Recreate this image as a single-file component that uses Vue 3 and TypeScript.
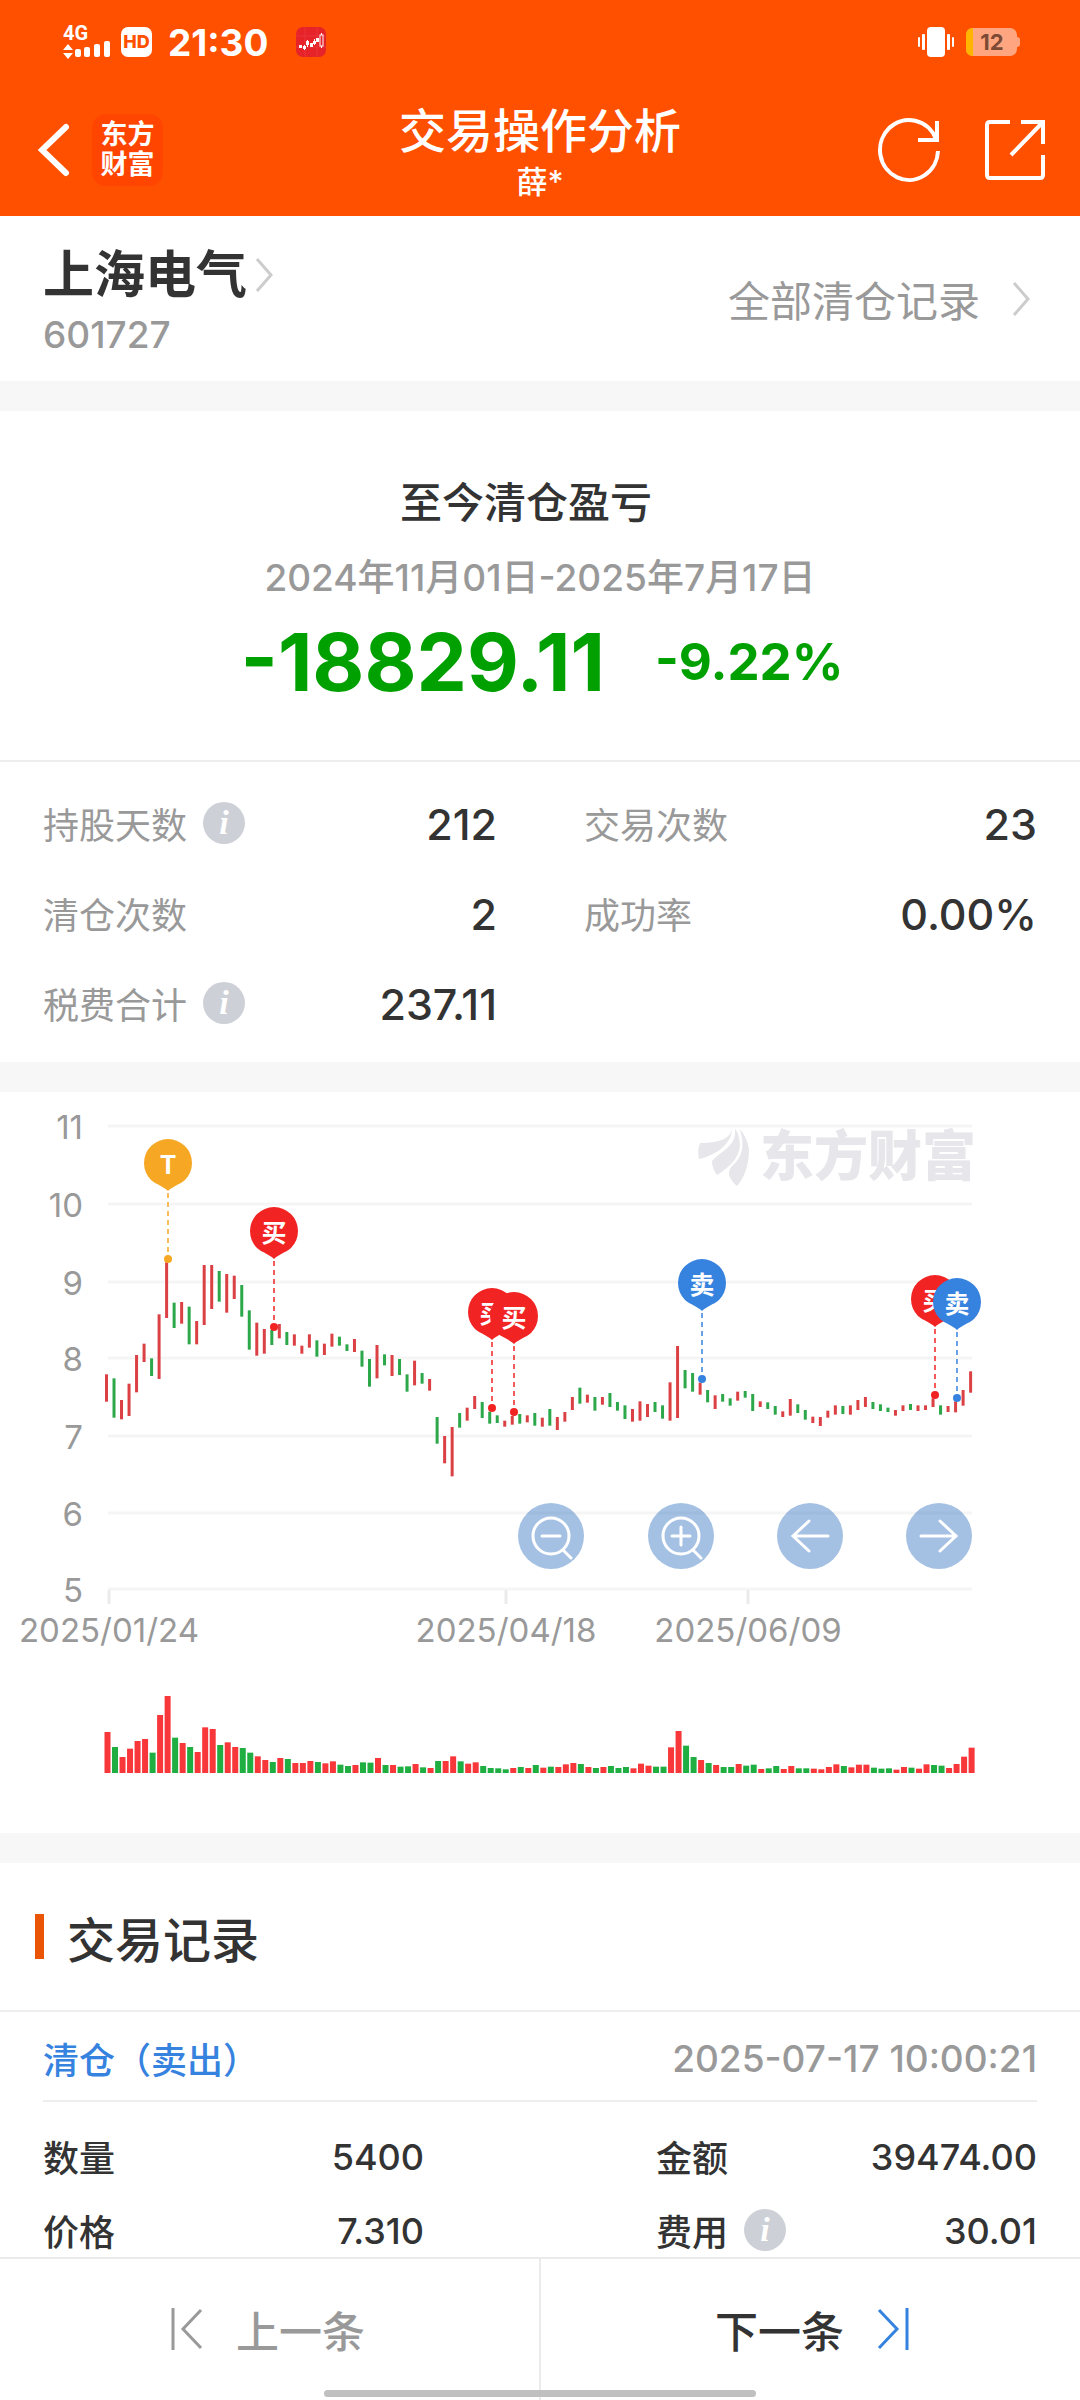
<script setup lang="ts">
type Dir = 'u' | 'd'
type Bar = [Dir, number, number, number, Dir?]

// Each bar: direction, high, low and volume height in thirds of a chart unit,
// then the volume colour when it differs from the candle's.
const bars: Bar[] = [
  ['u', 853, 935, 123], ['d', 865, 983, 78], ['u', 930, 988, 48], ['u', 881, 978, 73],
  ['u', 795, 907, 96], ['u', 761, 816, 102], ['d', 805, 858, 61], ['u', 673, 867, 174],
  ['u', 517, 684, 231], ['d', 638, 714, 106], ['u', 636, 701, 90], ['d', 650, 763, 78],
  ['u', 693, 763, 63], ['u', 525, 705, 137], ['u', 525, 657, 132], ['d', 543, 635, 84],
  ['u', 552, 668, 92], ['u', 557, 627, 78], ['d', 585, 680, 75], ['d', 661, 779, 61],
  ['u', 698, 797, 50], ['u', 717, 791, 39], ['d', 720, 765, 33], ['u', 702, 745, 45],
  ['d', 726, 765, 42], ['u', 733, 767, 30], ['u', 767, 791, 30], ['u', 733, 773, 36],
  ['d', 751, 800, 33], ['u', 761, 795, 29], ['u', 731, 770, 35], ['d', 740, 767, 25],
  ['d', 763, 783, 21], ['u', 747, 786, 24], ['d', 782, 830, 32], ['d', 807, 890, 31],
  ['u', 765, 865, 45], ['d', 793, 826, 24], ['u', 795, 858, 24], ['d', 807, 855, 19],
  ['d', 853, 905, 20], ['u', 812, 886, 27], ['d', 849, 881, 17], ['u', 867, 902, 15],
  ['d', 981, 1061, 36], ['u', 1038, 1120, 36], ['u', 1011, 1159, 50], ['d', 969, 1013, 35],
  ['u', 953, 992, 28], ['u', 918, 957, 32], ['d', 936, 984, 21], ['d', 965, 1001, 15],
  ['d', 976, 999, 14], ['u', 992, 1010, 11, 'd'], ['u', 978, 1004, 15], ['d', 972, 1001, 18],
  ['u', 976, 997, 15], ['d', 969, 1007, 24], ['u', 983, 1010, 16], ['d', 957, 1007, 19],
  ['u', 981, 1020, 18], ['u', 966, 995, 26], ['u', 921, 960, 30], ['d', 893, 941, 27],
  ['u', 914, 938, 18], ['d', 921, 962, 15], ['u', 921, 944, 18], ['d', 909, 951, 21],
  ['d', 936, 962, 15], ['d', 946, 987, 18], ['u', 957, 995, 14], ['u', 934, 992, 28],
  ['u', 942, 981, 22], ['d', 936, 966, 19], ['d', 946, 986, 19], ['u', 877, 992, 77],
  ['u', 768, 984, 126], ['d', 840, 895, 82], ['d', 849, 905, 48], ['u', 878, 914, 39],
  ['d', 900, 937, 30], ['u', 916, 957, 24], ['d', 912, 935, 18], ['d', 925, 947, 18],
  ['u', 905, 932, 27], ['d', 903, 923, 22], ['d', 912, 963, 25], ['u', 934, 951, 12],
  ['d', 937, 957, 14], ['d', 948, 974, 21], ['u', 964, 981, 12], ['u', 927, 977, 21],
  ['d', 943, 969, 14], ['d', 960, 989, 14], ['u', 980, 999, 13], ['u', 981, 1008, 11],
  ['u', 962, 983, 18], ['u', 946, 974, 26], ['d', 948, 972, 21], ['u', 946, 974, 17],
  ['u', 930, 960, 25], ['u', 921, 951, 25], ['d', 936, 957, 16], ['d', 943, 963, 13],
  ['d', 953, 966, 14], ['u', 960, 977, 10], ['u', 946, 963, 18], ['d', 942, 960, 16],
  ['u', 946, 963, 13], ['u', 946, 960, 26], ['u', 925, 951, 24, 'd'], ['d', 946, 974, 22],
  ['u', 948, 966, 15], ['u', 934, 967, 27], ['u', 900, 947, 49], ['u', 844, 908, 76],
]

const FIRST_X = 106.5
const STEP_X = 7.514
const VOLUME_BASE = 681

const candles = bars.map(([dir, high, low, volume, volumeDir], i) => ({
  dir,
  volumeDir: volumeDir ?? dir,
  x: FIRST_X + i * STEP_X,
  y: high / 3 - 2,
  h: (low - high) / 3,
  v: volume / 3,
}))

const priceLines = [
  { label: '11', y: 34 }, { label: '10', y: 112 }, { label: '9', y: 190 }, { label: '8', y: 266 },
  { label: '7', y: 344 }, { label: '6', y: 421 }, { label: '5', y: 497 },
]
const dates = [
  { label: '2025/01/24', x: 109 }, { label: '2025/04/18', x: 506 }, { label: '2025/06/09', x: 748 },
]
const markers = [
  { kind: 'both', label: 'T', x: 168, tip: 99, dot: 167 },
  { kind: 'buy', label: '买', x: 274, tip: 167, dot: 235 },
  { kind: 'buy', label: '买', x: 492, tip: 248, dot: 316 },
  { kind: 'buy', label: '买', x: 514, tip: 252, dot: 320 },
  { kind: 'sell', label: '卖', x: 702, tip: 219, dot: 287 },
  { kind: 'buy', label: '买', x: 935, tip: 235, dot: 303 },
  { kind: 'sell', label: '卖', x: 957, tip: 238, dot: 306 },
]

const tools = [
  { label: '缩小', path: 'M33 15a18 18 0 1 0 0 36a18 18 0 1 0 0-36M45 47l8 8M24 33h18' },
  { label: '放大', path: 'M33 15a18 18 0 1 0 0 36a18 18 0 1 0 0-36M45 47l8 8M24 33h18M33 24v18' },
  { label: '向左', path: 'M51 33H17M32 18L16 33L32 48' },
  { label: '向右', path: 'M15 33H49M34 18L50 33L34 48' },
]

const stats = [
  { label: '持股天数', value: '212', info: true },
  { label: '交易次数', value: '23', info: false },
  { label: '清仓次数', value: '2', info: false },
  { label: '成功率', value: '0.00%', info: false },
  { label: '税费合计', value: '237.11', info: true },
]
const record = [
  { label: '数量', value: '5400', info: false },
  { label: '金额', value: '39474.00', info: false },
  { label: '价格', value: '7.310', info: false },
  { label: '费用', value: '30.01', info: true },
]
</script>

<template>
  <div class="page">
    <header class="top">
      <div class="status">
        <svg width="50" height="44" viewBox="0 -4 50 44" fill="#fff">
          <text x="0" y="16" class="net">4G</text>
          <path d="M5 20l5 6H0zM5 35l5-6H0z" />
          <rect x="12" y="25" width="6" height="8" rx="2" /><rect x="21" y="23" width="6" height="10" rx="2" />
          <rect x="31" y="20" width="6" height="13" rx="2" /><rect x="41" y="17" width="6" height="16" rx="2" />
        </svg>
        <span class="hd">HD</span>
        <span class="time">21:30</span>
        <svg class="mini" width="30" height="30" viewBox="0 0 30 30">
          <rect width="30" height="30" rx="7" fill="#e52329" />
          <path d="M0 9H30M0 20H30M9 0V30M21 0V30" stroke="#f0444a" stroke-width="1" opacity=".5" />
          <g fill="none" stroke="#fff" stroke-width="1"><path d="M8.500 18v5M11.500 13v7M18.500 12v6M25.500 6v15" />
            <rect x="24" y="8" width="3" height="11" fill="#e52329" /></g>
          <path d="M3 18h3v3H3zM7 19h3v3H7zM10 14h3v4h-3zM14 16h3v4h-3zM17 14h3v3h-3zM20 11h3v4h-3z" fill="#fff" />
        </svg>
        <span class="spacer"></span>
        <svg width="36" height="30" viewBox="0 0 36 30" fill="#fff">
          <rect x="9" y="0" width="18" height="30" rx="4" />
          <rect x="4" y="7" width="3" height="16" rx="1" /><rect x="0" y="10" width="2" height="10" rx="1" />
          <rect x="29" y="7" width="3" height="16" rx="1" /><rect x="34" y="10" width="2" height="10" rx="1" />
        </svg>
        <svg class="battery" width="54" height="28" viewBox="0 0 54 28">
          <rect width="51" height="28" rx="7" fill="#ffa680" /><path d="M51 9q3 0 3 3v4q0 3-3 3z" fill="#ffa680" />
          <path d="M6 0H7V28H6Q0 27 0 21V7Q0 1 6 0Z" fill="#ffb400" />
          <text x="26" y="22" class="charge">12</text>
        </svg>
      </div>
      <div class="nav">
        <div class="side">
          <button aria-label="返回">
            <svg width="32" height="54" viewBox="0 0 32 54" fill="none" stroke="#fff" stroke-width="6" stroke-linecap="round"><path d="M28 4L4 27L28 50" /></svg>
          </button>
          <span class="brand">东方<br />财富</span>
        </div>
        <div class="heading">
          <h1>交易操作分析</h1>
          <p>薛*</p>
        </div>
        <div class="side end">
          <button aria-label="刷新">
            <svg width="66" height="66" viewBox="0 0 66 66" fill="none" stroke="#fff" stroke-width="4"><path d="M62 34A29 30 0 1 1 60 22M61 4V23H42" /></svg>
          </button>
          <button aria-label="分享">
            <svg width="66" height="66" viewBox="0 0 66 66" fill="none" stroke="#fff" stroke-width="4"><path d="M28 5H8Q5 5 5 8V58Q5 61 8 61H58Q61 61 61 58V38M39 5H61V27M60 6L29 38" /></svg>
          </button>
        </div>
      </div>
    </header>

    <section class="stock">
      <div class="title">
        <a class="name" href="#stock">上海电气<svg width="18" height="36" viewBox="0 0 18 36" fill="none" stroke="#ccc" stroke-width="3"><path d="M2 2L16 18L2 34" /></svg></a>
        <p class="code">601727</p>
      </div>
      <a class="all" href="#all">全部清仓记录<svg width="18" height="36" viewBox="0 0 18 36" fill="none" stroke="#ccc" stroke-width="3"><path d="M2 2L16 18L2 34" /></svg></a>
    </section>

    <section class="summary">
      <h2>至今清仓盈亏</h2>
      <p class="range">2024年11月01日-2025年7月17日</p>
      <p class="result"><strong>-18829.11</strong><b>-9.22%</b></p>
    </section>

    <dl class="stats">
      <div v-for="s in stats" :key="s.label">
        <dt>{{ s.label }}<button v-if="s.info" class="info" aria-label="说明">i</button></dt>
        <dd>{{ s.value }}</dd>
      </div>
    </dl>

    <section class="chart">
      <svg class="plot" viewBox="0 0 1080 741" role="img" aria-label="股价与成交量">
        <g stroke="#f5f5f5" stroke-width="3">
          <line v-for="p in priceLines" :key="p.label" x1="108" x2="972" :y1="p.y" :y2="p.y" />
        </g>
        <g stroke="#ebebeb" stroke-width="3">
          <line v-for="d in dates" :key="d.label" :x1="d.x" :x2="d.x" y1="498" y2="512" />
        </g>
        <g class="axis">
          <text v-for="p in priceLines" :key="p.label" x="83" :y="p.y + 13" text-anchor="end">{{ p.label }}</text>
          <text v-for="d in dates" :key="d.label" :x="d.x" y="550" text-anchor="middle">{{ d.label }}</text>
        </g>
        <g fill="#e6e6eb">
          <path d="M732 37C730 49 713 51 700 51Q697 58 699 67C717 63 732 51 732 37Z" />
          <path d="M735 37C737 53 723 58 712 69C712 75 715 80 717 83C730 75 740 65 740 52C739 43 737 39 735 37Z" />
          <path d="M740 37C745 55 742 65 733 73C728 78 728 83 731 87C733 91 736 93 737 94C745 85 749 71 749 58C748 48 743 41 740 37Z" />
          <text x="760" y="84" class="mark">东方财富</text>
        </g>
        <rect v-for="(c, i) in candles" :key="i" :class="c.dir" :x="c.x - 1.5" :y="c.y" width="3" :height="c.h" />
        <rect v-for="(c, i) in candles" :key="'v' + i" :class="['vol', c.volumeDir]" :x="c.x - 2" :y="VOLUME_BASE - c.v" width="6" :height="c.v" />
        <g v-for="m in markers" :key="m.x" :class="m.kind" :transform="`translate(${m.x} ${m.tip})`">
          <line x1="0" x2="0" y1="2" :y2="m.dot - m.tip" stroke="currentColor" stroke-width="2" stroke-dasharray="5 4" opacity=".75" />
          <circle :cy="m.dot - m.tip" r="4" fill="currentColor" />
          <path d="M0 0C-5-5-11-6-17-11A24 24 0 1 1 17-11C11-6 5-5 0 0Z" fill="currentColor" />
          <text x="0" y="-17" text-anchor="middle">{{ m.label }}</text>
        </g>
      </svg>
      <div class="tools">
        <button v-for="t in tools" :key="t.label" :aria-label="t.label">
          <svg width="66" height="66" viewBox="0 0 66 66" fill="none" stroke="#fff" stroke-width="3" stroke-linecap="round"><path :d="t.path" /></svg>
        </button>
      </div>
    </section>

    <section class="records">
      <h2>交易记录</h2>
      <article>
        <div class="kind"><span>清仓（卖出）</span><time>2025-07-17 10:00:21</time></div>
        <dl>
          <div v-for="r in record" :key="r.label">
            <dt>{{ r.label }}<button v-if="r.info" class="info" aria-label="说明">i</button></dt>
            <dd>{{ r.value }}</dd>
          </div>
        </dl>
      </article>
    </section>

    <footer class="pager">
      <button disabled>
        <svg width="34" height="44" viewBox="0 0 34 44" fill="none" stroke="#999" stroke-width="3"><path d="M3 1V43M31 3L13 22L31 41" /></svg>上一条
      </button>
      <button>
        下一条<svg width="34" height="44" viewBox="0 0 34 44" fill="none" stroke="#3682df" stroke-width="3"><path d="M31 1V43M3 3L21 22L3 41" /></svg>
      </button>
      <span class="home"></span>
    </footer>
  </div>
</template>

<style>
body { margin: 0; background: #fff; }
</style>

<style scoped>
.page { display: flex; flex-direction: column; min-height: 100vh; background: #fff; color: #333; font-family: Inter, "Noto Sans CJK SC", sans-serif; font-weight: 500; font-size: 36px; }
.page * { box-sizing: border-box; }
h1, h2, p, dl, dd { margin: 0; font-weight: 500; }
button { padding: 0; border: 0; background: none; font: inherit; color: inherit; }
a { color: inherit; text-decoration: none; }
svg { display: block; flex: none; }

.top { height: 216px; background: #ff5000; color: #fff; }
.status { display: flex; align-items: center; height: 84px; padding: 0 60px 0 63px; }
.net { font: 700 20px Roboto, sans-serif; }
.hd { display: flex; align-items: center; justify-content: center; width: 31px; height: 30px; margin-left: 8px; border-radius: 7px; background: #fff; color: #ff5000; font-size: 18px; font-weight: 800; line-height: 30px; }
.time { margin-left: 16px; padding-top: 2px; font-size: 37px; font-weight: 700; line-height: 40px; }
.mini { margin-left: 28px; }
.spacer { flex: 1; }
.battery { margin-left: 12px; }
.charge { font: 700 22px Inter, sans-serif; fill: #7d4a35; text-anchor: middle; }
.nav { display: flex; align-items: center; height: 132px; padding: 0 32px 0 38px; }
.side { display: flex; align-items: center; flex: 1; gap: 22px; }
.end { justify-content: flex-end; gap: 40px; }
.brand { width: 71px; padding: 6px 0; border-radius: 14px; background: #ff4500; font-size: 27px; font-weight: 700; line-height: 30px; text-align: center; }
.heading { padding: 8px 6px 0 0; text-align: center; }
.heading h1 { font-size: 47px; line-height: 56px; }
.heading p { font-size: 31px; line-height: 46px; }

.stock { display: flex; align-items: center; justify-content: space-between; height: 165px; padding: 0 50px 0 43px; }
.title { padding-top: 6px; }
.name { display: flex; align-items: center; gap: 8px; font-size: 51px; font-weight: 700; line-height: 66px; }
.code { color: #999; font-size: 37px; line-height: 54px; }
.all { display: flex; align-items: center; gap: 32px; color: #999; font-size: 42px; font-weight: 400; }

.summary { padding: 62px 0 53px; border-top: 30px solid #f7f7f7; text-align: center; }
.summary h2 { padding-right: 28px; font-size: 42px; line-height: 60px; }
.range { margin-top: 18px; color: #999; font-size: 37px; line-height: 54px; }
.result { display: flex; align-items: center; justify-content: center; gap: 50px; padding: 12px 0 0 4px; color: #00a000; line-height: 90px; }
.result strong { font-size: 80px; font-weight: 700; }
.result b { font-size: 51px; font-weight: 700; }

.stats { display: grid; grid-template-columns: 454px 1fr; column-gap: 87px; padding: 16px 43px 14px; border-top: 2px solid #eee; }
.stats > div, .records dl > div { display: flex; align-items: center; justify-content: space-between; }
.stats > div { height: 90px; }
dt { display: flex; align-items: center; gap: 16px; }
dd { padding-top: 2px; }
.stats dt { color: #999; font-weight: 400; }
.stats dd { font-size: 43px; }
.info { width: 42px; height: 42px; border-radius: 50%; background: #cdd0d6; color: #fff; font: italic 700 34px/40px "Liberation Serif", serif; text-align: center; }

.chart { position: relative; border-top: 30px solid #f7f7f7; border-bottom: 30px solid #f7f7f7; }
.plot { width: 100%; height: auto; }
.axis { fill: #999; font-size: 33px; font-weight: 400; }
.mark { font-size: 54px; font-weight: 900; }
.u { fill: #db4144; }
.d { fill: #2ca84b; }
.vol.u { fill: #f8373a; }
.vol.d { fill: #1eae41; }
.both { color: #f6a724; }
.buy { color: #f22323; }
.sell { color: #3682df; }
.both text, .buy text, .sell text { fill: #fff; font-size: 25px; font-weight: 700; }
.tools { position: absolute; bottom: 264px; left: 48%; right: 10%; display: flex; justify-content: space-between; }
.tools button { border-radius: 50%; background: rgba(54, 118, 193, .45); }

.records { flex: 1; }
.records h2 { display: flex; align-items: center; gap: 23px; height: 149px; padding: 0 35px; border-bottom: 2px solid #eee; font-size: 48px; }
.records h2::before { content: ""; width: 9px; height: 45px; background: #e95504; }
.records article { padding: 0 43px; }
.kind { display: flex; align-items: center; justify-content: space-between; height: 90px; padding-top: 4px; border-bottom: 2px solid #eee; color: #3682df; }
.kind time { color: #999; font-size: 37px; }
.records dl { display: grid; grid-template-columns: 381px 1fr; gap: 26px 232px; padding-top: 30px; }
.records dl > div { height: 48px; }

.pager { position: sticky; bottom: 0; display: flex; height: 143px; border-top: 2px solid #ebebeb; background: #fff; }
.pager button { display: flex; flex: 1; align-items: center; justify-content: center; gap: 32px; padding: 0 4px 2px 0; font-size: 43px; }
.pager button:first-child { border-right: 2px solid #ebebeb; color: #999; }
.pager button:nth-child(2) { padding: 0 0 2px 4px; }
.home { position: absolute; bottom: 3px; left: 30%; right: 30%; height: 7px; border-radius: 4px; background: #c0c0c0; }
</style>
